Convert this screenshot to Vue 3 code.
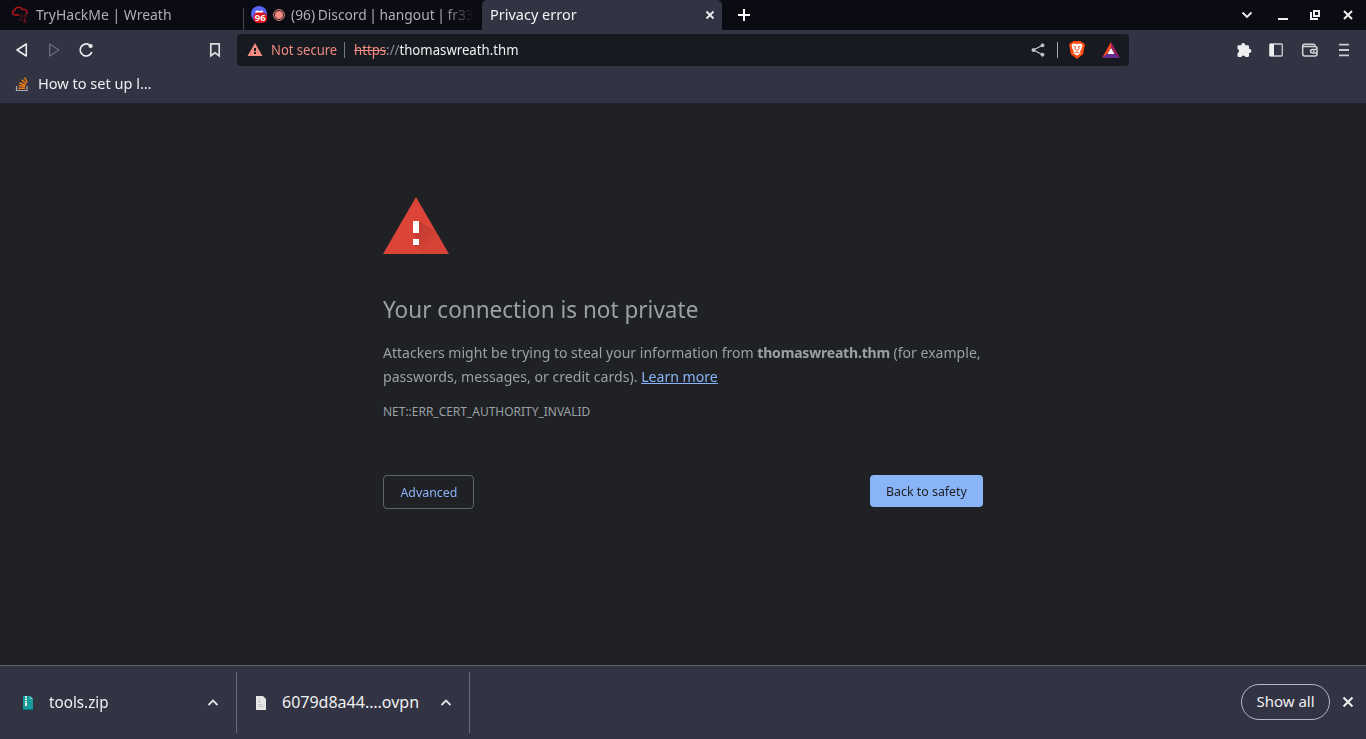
<script setup>
const downloads = [
  { name: 'tools.zip', kind: 'zip' },
  { name: '6079d8a44….ovpn', kind: 'file' },
]
</script>

<template>
  <div class="browser">
    <header class="tabs">
      <div class="tab tab-thm">
        <svg class="cloud" width="18" height="18" viewBox="0 0 18 18" fill="none">
          <path d="M8 9H4.200C.8 9 .6 4.700 3.700 4.300 4 2.200 5.600 1.200 7.600 1.200c1.900 0 3.200.8 3.800 2.400 2.500-.6 4.800.7 4.800 2.700 0 .7-.3 1.200-.8 1.700" stroke="#b5121b" stroke-width="1.400" />
          <path d="M9 9h2m1.500 0H16M9.500 11h2m1 0h3M9 14h3m2-1h1m-3 3h4M8.500 13v1m5-1v2" stroke="#771620" stroke-width="1.200" />
        </svg>
        <span class="thm-title">TryHackMe | Wreath</span>
      </div>
      <div class="tab tab-discord">
        <svg width="18" height="18" viewBox="0 0 18 18">
          <circle cx="8" cy="8" r="8" fill="#5865f2" />
          <path d="M4.500 5.200l2-1 .5.800h2.500l.5-.8 2 1V8h-7.500z" fill="#fff" />
          <rect x="2.500" y="6.500" width="13.500" height="10.500" rx="4.500" fill="#e0101a" />
          <text x="9.200" y="15.300" text-anchor="middle" class="badge">96</text>
        </svg>
        <svg width="12" height="12" viewBox="0 0 12 12"><circle cx="6" cy="6" r="5.400" fill="none" stroke="#f28b82" /><circle cx="6" cy="6" r="4" fill="#f28b82" /></svg>
        <span class="discord-title">(96) Discord | hangout | fr33</span>
      </div>
      <div class="tab active">
        <span class="privacy">Privacy error</span>
        <svg width="10" height="10" viewBox="0 0 10 10" stroke="#eeeef1" stroke-width="1.800"><path d="M1.500 1.500l7 7m0-7l-7 7" /></svg>
      </div>
      <svg class="plus" width="12" height="12" viewBox="0 0 12 12" stroke="#fff" stroke-width="2"><path d="M6 0v12M0 6h12" /></svg>
      <div class="window-icons">
        <svg width="12" height="12" viewBox="0 0 12 12" fill="none" stroke="#eee" stroke-width="1.800"><path d="M1.500 3.500L6 8l4.500-4.500" /></svg>
        <svg width="12" height="12" viewBox="0 0 12 12"><path fill="#eee" d="M1 9h10v2H1z" /></svg>
        <svg width="12" height="12" viewBox="0 0 12 12" fill="none" stroke="#eee" stroke-width="2"><path d="M5 2h5v5H5zM2 3v7h7" /></svg>
        <svg width="12" height="12" viewBox="0 0 12 12" stroke="#eee" stroke-width="2"><path d="M2 2l8 8m0-8l-8 8" /></svg>
      </div>
    </header>

    <section class="toolbar">
      <div class="navigation">
        <svg width="16" height="16" viewBox="0 0 16 16" fill="none" stroke="#eee" stroke-width="1.500" stroke-linejoin="round"><path d="M12.300 2v12L3 8z" /></svg>
        <svg width="16" height="16" viewBox="0 0 16 16" fill="none" stroke="#686b79" stroke-width="1.300" stroke-linejoin="round"><path d="M3.700 2v12L13 8z" /></svg>
        <svg width="16" height="16" viewBox="0 0 16 16" fill="none"><path d="M11.500 3A6 6 0 1 0 13.800 10" stroke="#eee" stroke-width="1.700" /><circle cx="12.600" cy="4" r="2.100" fill="#eee" /></svg>
      </div>
      <svg class="bookmark" width="12" height="16" viewBox="0 0 12 16" fill="none" stroke="#ddd" stroke-width="1.700"><path d="M1.800 1.800h8.400v12L6 10.800l-4.200 3z" /></svg>
      <div class="address">
        <svg class="warning" width="16" height="14" viewBox="0 0 16 14"><path fill="#f28b82" d="M8 0l7.500 13H.5z" /><path fill="#181a22" d="M7 5h2v3H7zm0 4h2v2H7z" /></svg>
        <span class="notsecure">Not secure</span><i class="rule"></i>
        <span class="url"><del>https</del><span class="slashes">://</span>thomaswreath.thm</span>
        <div class="address-icons">
          <svg width="14" height="14" viewBox="0 0 14 14" fill="#c6c6c9" stroke="#c6c6c9"><path d="M12 2L2.500 7l9.500 5" fill="none" stroke-width="1.200" /><circle cx="11.500" cy="2.300" r="1.500" /><circle cx="2.500" cy="7" r="1.500" /><circle cx="11.500" cy="11.700" r="1.500" /></svg>
          <i></i>
          <svg class="lion" width="16" height="18" viewBox="0 0 16 18"><path fill="#ff4b0b" d="M4.500 0h7l1.500 1.500 1.500.2 1.500 2-.6 2L14.200 13 8 18l-6.200-5L.6 5.700 0 3.700l1.500-2L3 1.500z" /><path fill="#fff" d="M2.500 4.200L4.200 2.600 8 3l3.800-.4 1.700 1.600-.7 3-1.800 3.500.8 1.500L8 14.600l-3.800-2.400.8-1.500L3.200 7.200z" /><path d="M4.400 5.300l2.300.6-.9 2L8 9.400l2.200-1.500-.9-2 2.300-.6M5.500 12L8 10.900l2.500 1.100" fill="none" stroke="#ff4b0b" stroke-width=".9" /></svg>
          <svg class="bat" width="18" height="16" viewBox="0 0 18 16"><path fill="#ff4724" d="M9 0v6l-4 6-5 4z" /><path fill="#9e1f63" d="M9 0l9 16-5-4-4-6z" /><path fill="#662d91" d="M0 16l5-4h8l5 4z" /><path fill="#fff" d="M9 6l3.600 6H5.400z" /></svg>
        </div>
      </div>
      <div class="extensions">
        <svg width="16" height="16" viewBox="0 0 16 16"><path fill="#eee" d="M5.200 3.300V3a2 2 0 1 1 4 0v.3h2.600q1.200 0 1.200 1.200v2.300h.3a2.100 2.100 0 1 1 0 4.200H13v2.800q0 1.200-1.200 1.200H9.500a2.200 2.200 0 0 0-4.200 0H2.700q-1.200 0-1.200-1.200v-2.600a2.200 2.200 0 0 0 0-4.200V4.500q0-1.200 1.200-1.200z" /></svg>
        <svg width="16" height="16" viewBox="0 0 16 16"><rect x="1.700" y="2" width="12.600" height="12" rx="1" fill="none" stroke="#d0d0d3" stroke-width="1.300" /><path d="M2 2h4v12H2z" fill="#eee" /></svg>
        <svg width="18" height="16" viewBox="0 0 18 16" fill="none" stroke="#d5d5d8" stroke-width="1.500"><path d="M14 4.500V3.700Q14 2.200 12.500 2.200H3.500Q1.700 2.200 1.700 4v7.700q0 2.300 2 2.300H14q2 0 2-2V6.500Q16 4.500 14 4.500H2M16.500 7.500h-4.700Q9.500 7.500 9.500 9.200t2.300 1.800h4.700" /><path d="M12 9.200h1.500" /></svg>
        <svg width="16" height="16" viewBox="0 0 16 16" stroke="#c9cacd" stroke-width="1.800"><path d="M3 2.700h10M3 8h10M3 13.300h10" /></svg>
      </div>
    </section>

    <nav class="bookmarks">
      <svg width="14" height="16" viewBox="0 0 14 16" fill="none"><path d="M1.500 10v4.500H12V10" stroke="#aaa" stroke-width="1.200" /><path d="M3.500 12.300H10M3.700 9.600l6.500 1M4.500 6.700l6 2.500M6.700 3.800l4.500 4M9.500 1.500l2.800 5" stroke="#f47b10" stroke-width="1.500" /></svg>
      <span class="bookmark-title">How to set up l…</span>
    </nav>

    <main class="page">
      <article class="notice">
        <svg class="large-warning" width="66" height="57" viewBox="0 0 66 57">
          <defs><linearGradient id="shade" x1="0" y1="0" x2="1" y2="1"><stop stop-color="#000" stop-opacity=".15" /><stop offset=".65" stop-color="#000" stop-opacity=".02" /></linearGradient></defs>
          <path fill="#db4437" d="M33 0l33 57H0z" /><path fill="url(#shade)" d="M36 24l16 10 14 23H39l-9-9 6-1-6-11h6z" /><path fill="#fff" d="M30 24h6v12h-6zm0 18h6v6h-6z" />
        </svg>
        <h1><span>Your connection is not private</span></h1>
        <p><span class="line-one">Attackers might be trying to steal your information from <strong>thomaswreath.thm</strong> (for example,</span><br><span class="line-two">passwords, messages, or credit cards). <a>Learn more</a></span></p>
        <div class="code"><span>NET::ERR_CERT_AUTHORITY_INVALID</span></div>
        <div class="actions"><button class="advanced"><span>Advanced</span></button><button class="safe"><span>Back to safety</span></button></div>
      </article>
    </main>

    <footer class="downloads">
      <div v-for="item in downloads" :key="item.name" :class="['download', item.kind]">
        <svg v-if="item.kind === 'zip'" width="10" height="14" viewBox="0 0 10 14"><path fill="#169c9c" d="M0 0h7l3 3v11H0z" /><path fill="#76cec9" d="M7 0v3h3z" /><path d="M3 0v9" stroke="#eee" stroke-width="2" stroke-dasharray="1.500 1" /><path fill="#eee" d="M2 7h2v3H2z" /><path fill="#087779" d="M0 13h10v1H0z" /></svg>
        <svg v-else width="10" height="14" viewBox="0 0 10 14"><path fill="#e5e5e4" d="M0 0h7l3 3v11H0z" /><path stroke="#c4c4c4" d="M2 3.500h2M2 5.500h3M2 8.500h5M2 10.500h6" /></svg>
        <span>{{ item.name }}</span>
        <svg class="up" width="12" height="10" viewBox="0 0 12 10" fill="none" stroke="#e2e2e5" stroke-width="1.800"><path d="M1.500 7L6 2.500 10.500 7" /></svg>
      </div>
      <button class="show-all"><span>Show all</span></button>
      <svg class="dismiss" width="12" height="12" viewBox="0 0 12 12" stroke="#eee" stroke-width="2"><path d="M1.500 1.500l9 9m0-9l-9 9" /></svg>
    </footer>
  </div>
</template>

<style>
html, body { margin: 0; overflow: hidden; background: #202124; }
</style>

<style scoped>
* { box-sizing: border-box; }
svg { display: block; flex: none; }
.browser { width: 1366px; height: 739px; display: flex; flex-direction: column; font-family: "Noto Sans", sans-serif; font-size: 15px; color: #f0f0f2; background: #202124; overflow: hidden; white-space: nowrap; }
.tabs { height: 30px; display: flex; align-items: center; background: #0b0b14; color: #aeafb3; flex: none; }
.tab { height: 30px; display: flex; align-items: center; }
.tab-thm { width: 243px; padding-left: 11px; gap: 7px; }
.thm-title { transform: scaleX(.931); transform-origin: left; margin-top: -2px; }
.tab-discord { width: 239px; padding: 0 12px 0 8px; gap: 4px; background: linear-gradient(#454650,#454650) left bottom/1px 22px no-repeat; }
.discord-title { flex: none; margin-left: 2px; margin-top: -2px; word-spacing: -1px; transform: scaleX(.918); transform-origin: left; mask-image: linear-gradient(to right,#000 83%,transparent 100%); }
.badge { font: bold 9.500px "Noto Sans", sans-serif; fill: #fff; }
.active { width: 240px; padding: 0 7px 0 8px; justify-content: space-between; background: #323443; color: #f2f2f4; border-radius: 5px 5px 0 0; }
.privacy { transform: scaleX(.966); transform-origin: left; margin-top: -2px; }
.plus { margin-left: 16px; }
.window-icons { display: flex; gap: 21px; margin-left: auto; margin-right: 12px; }
.window-icons svg:first-child { margin-right: 3px; }
.window-icons svg:nth-child(2) { margin-right: -1px; }
.toolbar { height: 38px; display: flex; align-items: center; background: #323443; padding: 2px 14px 0; flex: none; }
.navigation { display: flex; gap: 16px; }
.bookmark { margin-left: 115px; margin-right: 16px; }
.address { width: 892px; height: 32px; border-radius: 4px; display: flex; align-items: center; background: #181a22; padding-left: 10px; font-size: 14px; }
.notsecure { color: #f28b82; margin-left: 8px; margin-right: -5px; margin-top: -1px; transform: scaleX(.93); transform-origin: left; }
.rule { width: 1px; height: 16px; background: #777980; margin: 0 9px 0 7px; }
.url { margin-top: -1px; transform: scaleX(.942); transform-origin: left; }
del { color: #f28b82; text-decoration-thickness: 1px; }
.slashes { color: #8f9198; }
.address-icons { display: flex; align-items: center; margin-left: auto; margin-right: 9px; }
.address-icons i { width: 1px; height: 16px; background: #a6a7aa; margin: 0 11px 0 12px; }
.lion { margin-right: 17px; }
.extensions { display: flex; align-items: center; gap: 17px; margin-left: auto; }
.extensions svg:first-child { margin-right: -1px; }
.bookmarks { height: 36px; padding: 0 16px 4px 15px; display: flex; align-items: center; gap: 9px; background: #323443; border-bottom: 1px solid #25222b; flex: none; }
.bookmark-title { margin-top: -2px; transform: scaleX(.97); transform-origin: left; }
.page { flex: 1; padding: 93px 383px 0; color: #9aa0a6; }
.notice { width: 600px; }
h1 { margin: 40px 0 17px; font-size: 24px; line-height: 29px; font-weight: 400; }
h1 span, .line-one, .line-two { display: inline-block; transform-origin: left; }
h1 span { transform: scaleX(.9385); }
p { margin: 0; font-size: 15px; line-height: 24px; }
.line-one { transform: scaleX(.936); }
.line-one strong { letter-spacing: -.23px; }
.line-two { transform: scaleX(.94); }
a { color: #8ab4f8; text-decoration: underline; }
.code { font-size: 12px; line-height: 18px; margin-top: 15px; }
.code span { letter-spacing: -.02px; }
.actions { display: flex; justify-content: space-between; align-items: flex-start; margin-top: 54px; }
button { font-family: inherit; padding: 0; white-space: nowrap; display: flex; align-items: center; justify-content: center; }
.actions span { transform: scaleX(.952); }
.advanced { width: 91px; height: 34px; border: 1px solid #5f6368; border-radius: 4px; background: transparent; color: #8ab4f8; font-size: 13px; }
.safe { width: 113px; height: 32px; border: 0; border-radius: 4px; background: #8ab4f8; color: #202124; font-size: 13px; }
.downloads { height: 74px; flex: none; display: flex; align-items: center; background: #323443; border-top: 1px solid #61626a; padding-bottom: 0; }
.download { height: 61px; display: flex; align-items: center; border-right: 1px solid #6a6b77; font-size: 16px; }
.zip { width: 237px; padding-left: 23px; }
.file { width: 233px; padding-left: 19px; }
.download span { margin-left: 16px; transform-origin: left; margin-top: -1px; }
.zip span { transform: scaleX(.95); }
.download .up { margin-left: auto; margin-right: 17px; }
.show-all { width: 89px; height: 36px; border: 1px solid #b8b9c3; border-radius: 18px; background: transparent; color: #f0f0f2; font-size: 15px; margin-left: auto; margin-bottom: 1px; }
.show-all span { margin-top: -2px; }
.dismiss { margin: 0 12px 1px; }
</style>
